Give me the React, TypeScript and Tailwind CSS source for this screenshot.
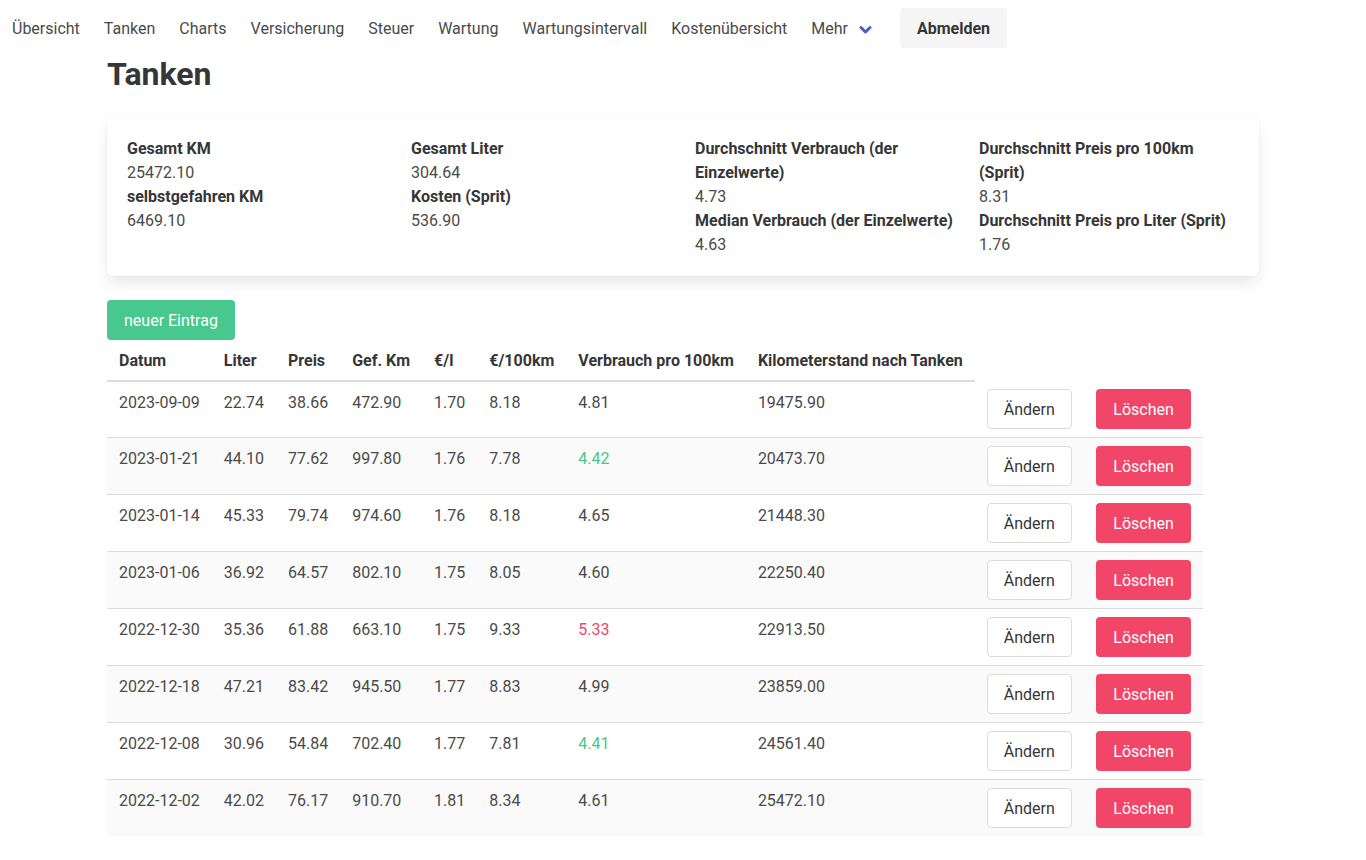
const navItems = ['Übersicht', 'Tanken', 'Charts', 'Versicherung', 'Steuer', 'Wartung', 'Wartungsintervall', 'Kostenübersicht'];

const stats = [
  [
    ['Gesamt KM', '25472.10'],
    ['selbstgefahren KM', '6469.10'],
  ],
  [
    ['Gesamt Liter', '304.64'],
    ['Kosten (Sprit)', '536.90'],
  ],
  [
    ['Durchschnitt Verbrauch (der Einzelwerte)', '4.73'],
    ['Median Verbrauch (der Einzelwerte)', '4.63'],
  ],
  [
    ['Durchschnitt Preis pro 100km (Sprit)', '8.31'],
    ['Durchschnitt Preis pro Liter (Sprit)', '1.76'],
  ],
];

const headers = ['Datum', 'Liter', 'Preis', 'Gef. Km', '€/l', '€/100km', 'Verbrauch pro 100km', 'Kilometerstand nach Tanken'];

type Row = {
  date: string;
  liter: string;
  price: string;
  km: string;
  perLiter: string;
  per100: string;
  usage: string;
  tone?: 'good' | 'bad';
  odo: string;
};

const rows: Row[] = [
  { date: '2023-09-09', liter: '22.74', price: '38.66', km: '472.90', perLiter: '1.70', per100: '8.18', usage: '4.81', odo: '19475.90' },
  { date: '2023-01-21', liter: '44.10', price: '77.62', km: '997.80', perLiter: '1.76', per100: '7.78', usage: '4.42', tone: 'good', odo: '20473.70' },
  { date: '2023-01-14', liter: '45.33', price: '79.74', km: '974.60', perLiter: '1.76', per100: '8.18', usage: '4.65', odo: '21448.30' },
  { date: '2023-01-06', liter: '36.92', price: '64.57', km: '802.10', perLiter: '1.75', per100: '8.05', usage: '4.60', odo: '22250.40' },
  { date: '2022-12-30', liter: '35.36', price: '61.88', km: '663.10', perLiter: '1.75', per100: '9.33', usage: '5.33', tone: 'bad', odo: '22913.50' },
  { date: '2022-12-18', liter: '47.21', price: '83.42', km: '945.50', perLiter: '1.77', per100: '8.83', usage: '4.99', odo: '23859.00' },
  { date: '2022-12-08', liter: '30.96', price: '54.84', km: '702.40', perLiter: '1.77', per100: '7.81', usage: '4.41', tone: 'good', odo: '24561.40' },
  { date: '2022-12-02', liter: '42.02', price: '76.17', km: '910.70', perLiter: '1.81', per100: '8.34', usage: '4.61', odo: '25472.10' },
];

export default function App() {
  return (
    <div className="min-h-screen bg-white font-['Roboto',sans-serif] text-base leading-6 text-[#4a4a4a]">
      {/* Navbar */}
      <nav className="flex h-14 items-stretch">
        {navItems.map((item) => (
          <a key={item} className="flex items-center px-3 pt-[2px] text-[#4a4a4a]">
            {item}
          </a>
        ))}
        <a className="flex items-center pl-3 pr-4 pt-[2px] text-[#4a4a4a]">
          Mehr
          <svg className="ml-[11px] h-[13px] w-[13px]" viewBox="0 0 13 13" fill="none">
            <polyline points="2,4.5 6.5,9 11,4.5" stroke="#485fc7" strokeWidth="3" strokeLinecap="round" strokeLinejoin="round" />
          </svg>
        </a>
        <div className="flex items-center px-3">
          <button className="h-10 rounded bg-[#f5f5f5] px-[17px] pt-px font-bold text-[#363636]">Abmelden</button>
        </div>
      </nav>

      <div className="mx-auto w-[1152px]">
        <h1 className="mb-6 text-[32px] font-bold leading-[36px] text-[#363636]">Tanken</h1>

        {/* Summary box */}
        <div className="mb-6 rounded-md bg-white px-5 pb-[19px] pt-[21px] shadow-[0_8px_16px_-2px_rgba(10,10,10,0.1),0_0_0_1px_rgba(10,10,10,0.02)]">
          <div className="grid grid-cols-4 gap-6">
            {stats.map((col, i) => (
              <div key={i}>
                {col.map(([label, value]) => (
                  <div key={label}>
                    <div className="font-bold text-[#363636]">{label}</div>
                    <div>{value}</div>
                  </div>
                ))}
              </div>
            ))}
          </div>
        </div>

        <button className="h-10 rounded bg-[#48c78e] px-[17px] pt-px text-white">neuer Eintrag</button>

        <table className="border-collapse">
          <thead>
            <tr>
              {headers.map((h) => (
                <th key={h} className="border-b-2 border-[#dbdbdb] px-3 pb-[7px] pt-[9px] text-left align-top font-bold text-[#363636]">
                  {h}
                </th>
              ))}
            </tr>
          </thead>
          <tbody>
            {rows.map((r, i) => {
              const last = i === rows.length - 1;
              const cell = `px-3 pb-[7px] pt-[9px] align-top ${last ? '' : 'border-b border-[#dbdbdb]'}`;
              const btnCell = `px-3 py-2 align-top ${last ? '' : 'border-b border-[#dbdbdb]'}`;
              const usageColor = r.tone === 'good' ? 'text-[#48c78e]' : r.tone === 'bad' ? 'text-[#f14668]' : '';
              return (
                <tr key={r.date} className={i % 2 === 1 ? 'bg-[#fafafa]' : ''}>
                  <td className={cell}>{r.date}</td>
                  <td className={cell}>{r.liter}</td>
                  <td className={cell}>{r.price}</td>
                  <td className={cell}>{r.km}</td>
                  <td className={cell}>{r.perLiter}</td>
                  <td className={cell}>{r.per100}</td>
                  <td className={`${cell} ${usageColor}`}>{r.usage}</td>
                  <td className={cell}>{r.odo}</td>
                  <td className={btnCell}>
                    <button className="h-10 rounded border border-[#dbdbdb] bg-white px-[16px] pt-px text-[#363636]">Ändern</button>
                  </td>
                  <td className={btnCell}>
                    <button className="h-10 rounded border border-transparent bg-[#f14668] px-[16.5px] pt-px text-white">Löschen</button>
                  </td>
                </tr>
              );
            })}
          </tbody>
        </table>
      </div>
    </div>
  );
}
